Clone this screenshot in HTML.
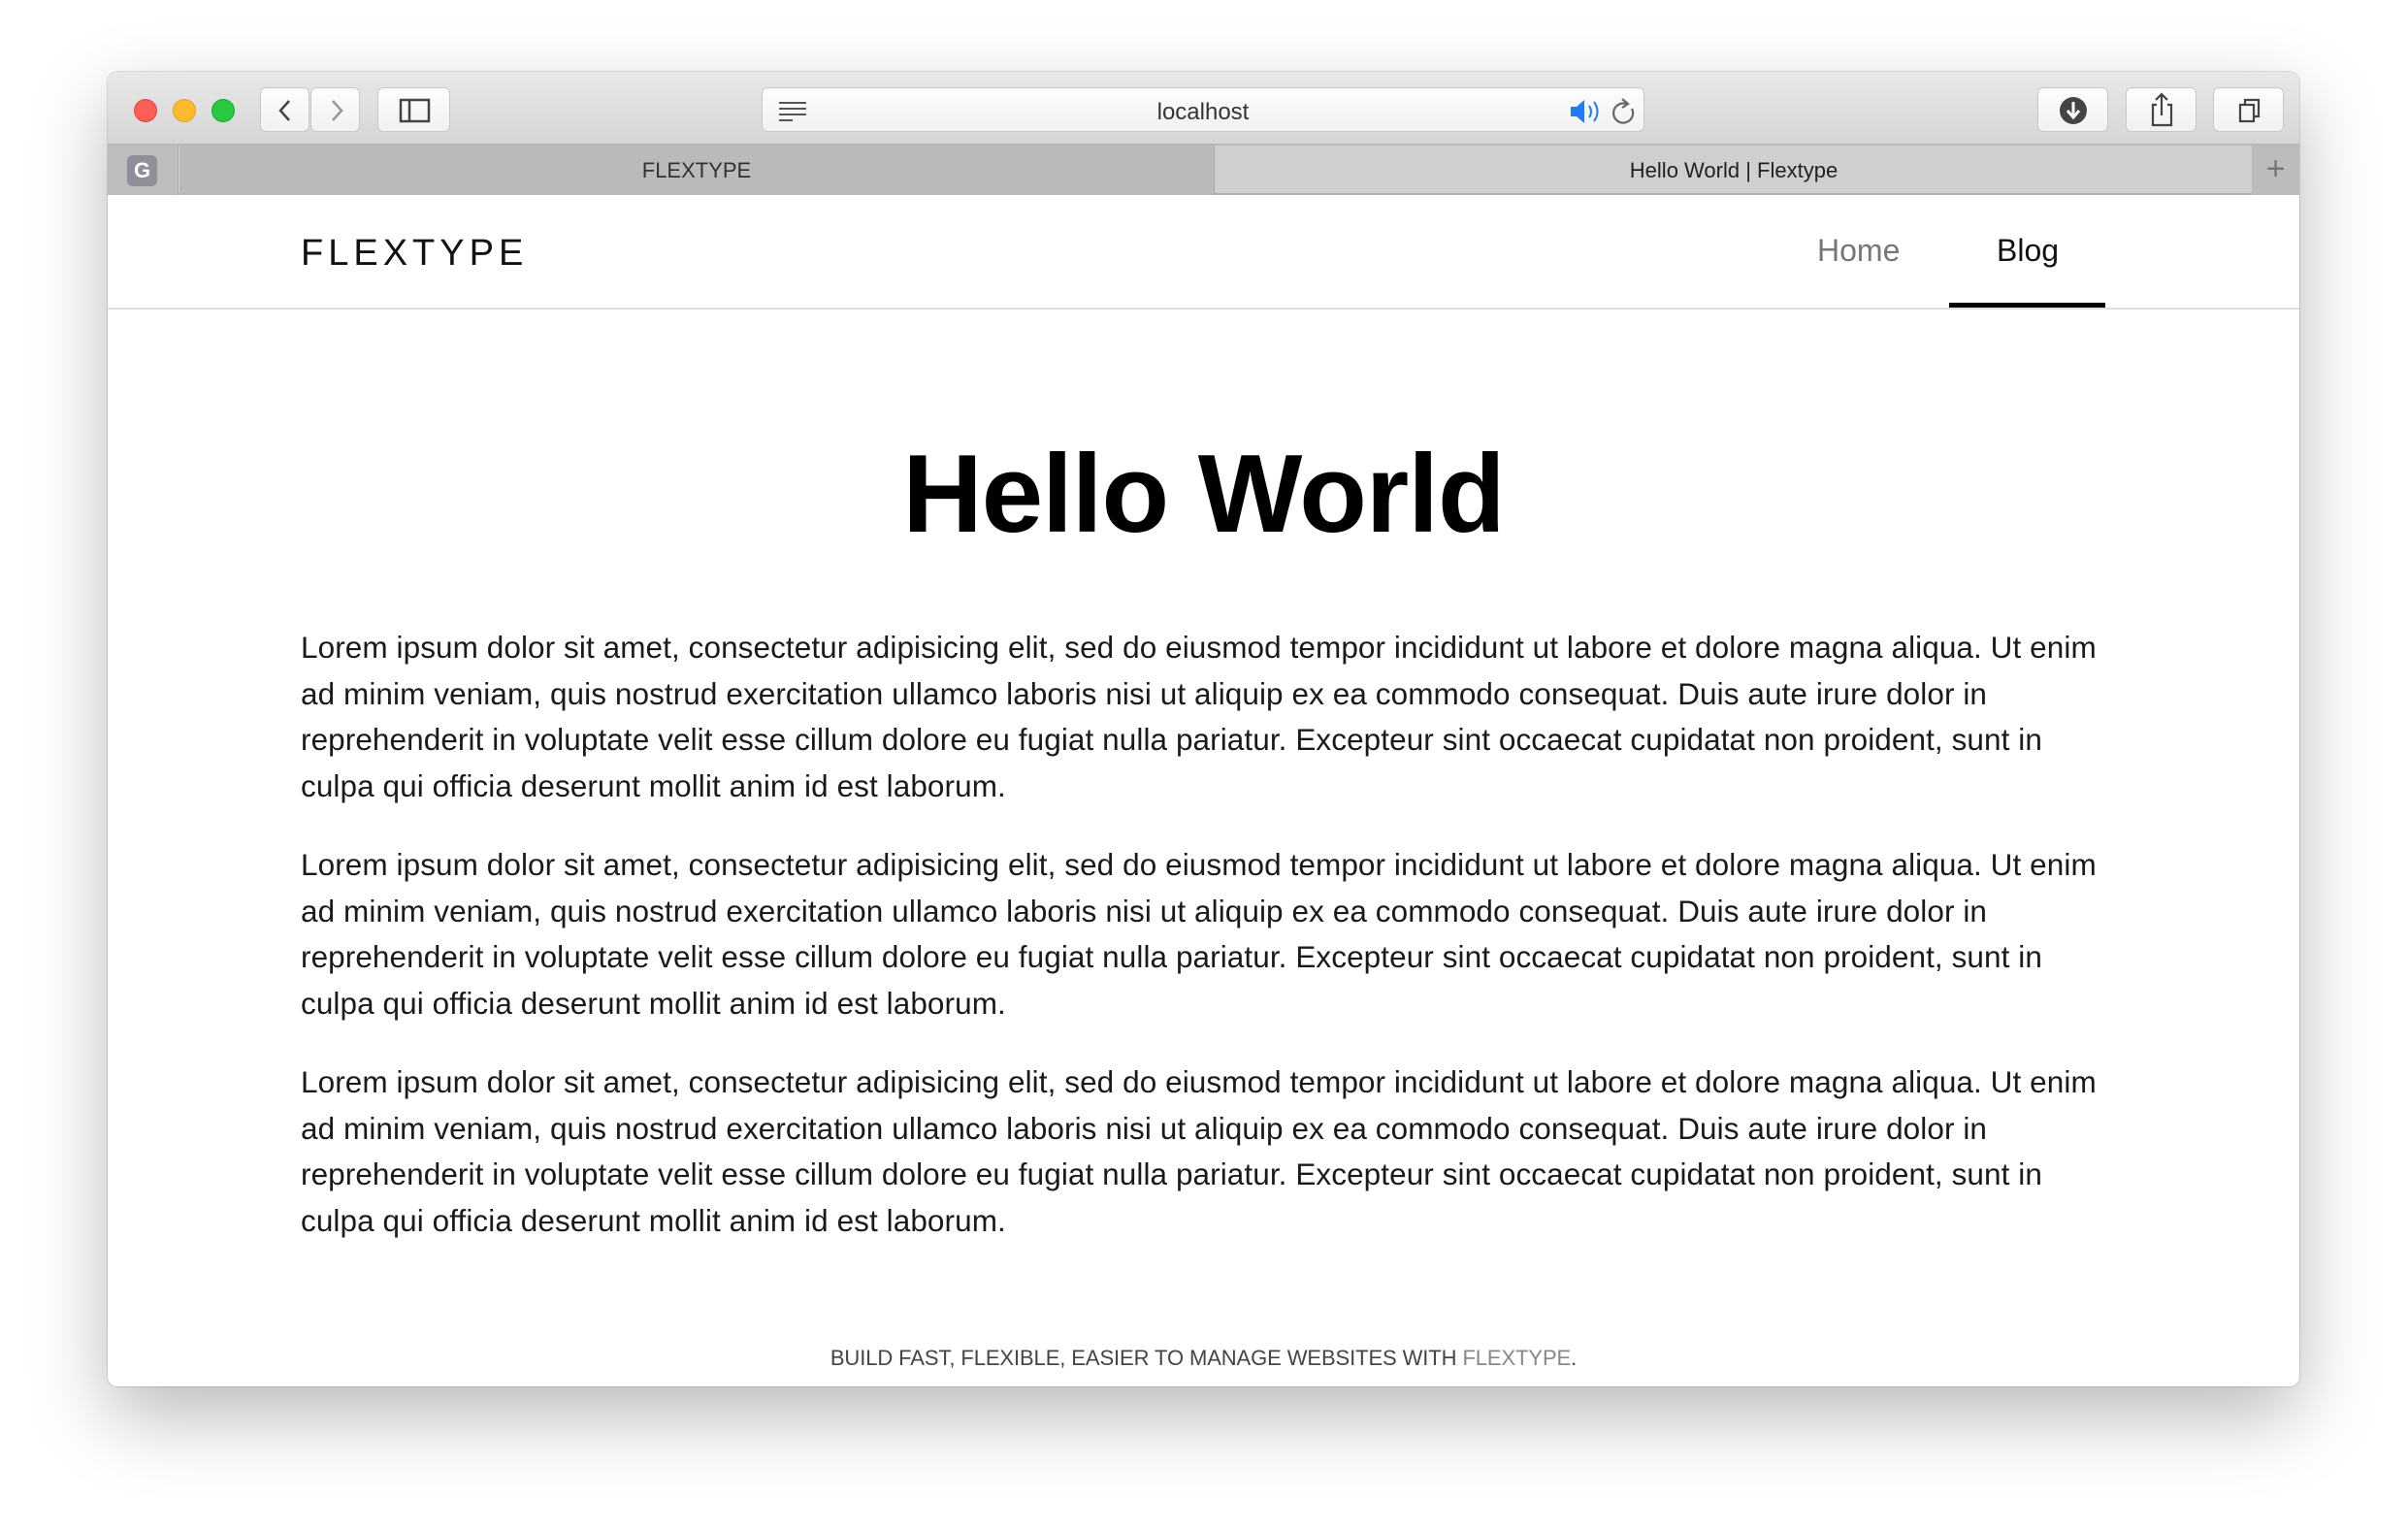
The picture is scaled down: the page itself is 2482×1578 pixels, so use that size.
<!DOCTYPE html>
<html><head><meta charset="utf-8"><style>
*{margin:0;padding:0;box-sizing:border-box}
body{width:2482px;height:1578px;background:#fff;font-family:"Liberation Sans",sans-serif;position:relative;overflow:hidden}
.win{position:absolute;left:111px;top:74px;width:2259px;height:1355px;border-radius:10px;overflow:hidden;background:#fff;box-shadow:0 30px 80px rgba(0,0,0,.28),0 0 0 1px rgba(0,0,0,.12)}
.tb{position:absolute;left:0;top:0;width:100%;height:76px;background:linear-gradient(#e8e8e8,#d6d6d6);border-bottom:2px solid #b8b8b8}
.dot{position:absolute;top:28px;width:24px;height:24px;border-radius:50%}
.btn{position:absolute;top:16px;height:46px;background:linear-gradient(#fdfdfd,#f1f1f1);border:1px solid #c8c8c8;border-radius:6px}
.tabs{position:absolute;left:0;top:76px;width:100%;height:51px;background:#cfcfcf;border-bottom:2px solid #b0b0b0}
.p{position:absolute;left:199px;width:1900px;font-size:31.5px;line-height:47.5px;color:#1a1a1a;white-space:nowrap;letter-spacing:0.08px}
</style></head><body>
<div class="win">
 <div class="tb">
  <div class="dot" style="left:27px;background:#fc5f57;border:1px solid #e0443e"></div>
  <div class="dot" style="left:67px;background:#fdbc2e;border:1px solid #dea123"></div>
  <div class="dot" style="left:107px;background:#28c840;border:1px solid #1aab29"></div>
  <div class="btn" style="left:157px;width:51px"><svg width="51" height="46"><path d="M29 13 L20 23 L29 33" stroke="#444" stroke-width="2.5" fill="none"/></svg></div>
  <div class="btn" style="left:209px;width:51px"><svg width="51" height="46"><path d="M22 13 L31 23 L22 33" stroke="#999" stroke-width="2.5" fill="none"/></svg></div>
  <div class="btn" style="left:278px;width:75px"><svg width="75" height="46"><rect x="23" y="12" width="29" height="22" stroke="#444" stroke-width="2.5" fill="none"/><line x1="32" y1="12" x2="32" y2="34" stroke="#444" stroke-width="2.5"/></svg></div>
  <div class="btn" style="left:674px;width:910px;text-align:center;line-height:50px;font-size:24px;color:#333">localhost
   <svg style="position:absolute;left:15px;top:12px" width="34" height="22"><path d="M2 3h28M2 9h28M2 15h28M2 21h14" stroke="#555" stroke-width="2"/></svg>
   <svg style="position:absolute;left:830px;top:10px" width="70" height="28"><path d="M3 9h6l8-7v24l-8-7H3z" fill="#1f7cf5"/><path d="M22 8q4 6 0 12M27 4q7 10 0 20" stroke="#1f7cf5" stroke-width="2" fill="none"/><path d="M60 6 a10 10 0 1 0 6 5" stroke="#666" stroke-width="2.2" fill="none"/><path d="M56 1l6 5-6 4" stroke="#666" stroke-width="2.2" fill="none"/></svg>
  </div>
  <div class="btn" style="left:1989px;width:73px"><svg width="73" height="46"><circle cx="36" cy="23" r="14" fill="#444"/><path d="M36 14v15M30 23l6 7 6-7" stroke="#fff" stroke-width="3" fill="none"/></svg></div>
  <div class="btn" style="left:2080px;width:73px"><svg width="73" height="46"><path d="M31 17h-4v21h19V17h-4M36 6v22M30 12l6-6 6 6" stroke="#444" stroke-width="2.2" fill="none"/></svg></div>
  <div class="btn" style="left:2170px;width:73px"><svg width="73" height="46"><rect x="27" y="17" width="14" height="17" stroke="#444" stroke-width="2.2" fill="none"/><path d="M32 17v-5h14v17h-5" stroke="#444" stroke-width="2.2" fill="none"/></svg></div>
 </div>
 <div class="tabs">
  <div style="position:absolute;left:0;top:0;width:73px;height:51px;border-right:1px solid #aaa;background:#bdbdbd"></div>
  <div style="position:absolute;left:20px;top:10px;width:31px;height:32px;border-radius:6px;background:#8e8f99;color:#fff;font-weight:bold;font-size:22px;text-align:center;line-height:32px">G</div>
  <div style="position:absolute;left:74px;top:0;width:1067px;height:51px;background:#bababa;border-right:1px solid #a8a8a8;text-align:center;line-height:51px;font-size:22px;color:#333">FLEXTYPE</div>
  <div style="position:absolute;left:1142px;top:0;width:1068px;height:51px;text-align:center;line-height:51px;font-size:22px;color:#222">Hello World | Flextype</div>
  <div style="position:absolute;left:2210px;top:0;width:49px;height:51px;background:#bcbcbc;text-align:center;line-height:48px;font-size:34px;color:#777">+</div>
 </div>
 <div style="position:absolute;left:199px;top:166px;font-size:38px;letter-spacing:5px;color:#111">FLEXTYPE</div>
 <div style="position:absolute;left:1762px;top:166px;font-size:32px;color:#777">Home</div>
 <div style="position:absolute;left:1947px;top:166px;font-size:32px;color:#111">Blog</div>
 <div style="position:absolute;left:1898px;top:238px;width:161px;height:5px;background:#000"></div>
 <div style="position:absolute;left:0;top:243px;width:100%;height:2px;background:#dde1e4"></div>
 <div style="position:absolute;left:0;top:370px;width:100%;text-align:center;font-size:114px;font-weight:bold;color:#000;letter-spacing:-1px">Hello World</div>
 <div class="p" style="top:570px">Lorem ipsum dolor sit amet, consectetur adipisicing elit, sed do eiusmod tempor incididunt ut labore et dolore magna aliqua. Ut enim<br>ad minim veniam, quis nostrud exercitation ullamco laboris nisi ut aliquip ex ea commodo consequat. Duis aute irure dolor in<br>reprehenderit in voluptate velit esse cillum dolore eu fugiat nulla pariatur. Excepteur sint occaecat cupidatat non proident, sunt in<br>culpa qui officia deserunt mollit anim id est laborum.</div>
 <div class="p" style="top:794px">Lorem ipsum dolor sit amet, consectetur adipisicing elit, sed do eiusmod tempor incididunt ut labore et dolore magna aliqua. Ut enim<br>ad minim veniam, quis nostrud exercitation ullamco laboris nisi ut aliquip ex ea commodo consequat. Duis aute irure dolor in<br>reprehenderit in voluptate velit esse cillum dolore eu fugiat nulla pariatur. Excepteur sint occaecat cupidatat non proident, sunt in<br>culpa qui officia deserunt mollit anim id est laborum.</div>
 <div class="p" style="top:1018px">Lorem ipsum dolor sit amet, consectetur adipisicing elit, sed do eiusmod tempor incididunt ut labore et dolore magna aliqua. Ut enim<br>ad minim veniam, quis nostrud exercitation ullamco laboris nisi ut aliquip ex ea commodo consequat. Duis aute irure dolor in<br>reprehenderit in voluptate velit esse cillum dolore eu fugiat nulla pariatur. Excepteur sint occaecat cupidatat non proident, sunt in<br>culpa qui officia deserunt mollit anim id est laborum.</div>
 <div style="position:absolute;left:0;top:1313px;width:100%;text-align:center;font-size:22px;color:#444;letter-spacing:-0.1px">BUILD FAST, FLEXIBLE, EASIER TO MANAGE WEBSITES WITH <span style="color:#888">FLEXTYPE</span>.</div>
</div>
</body></html>
